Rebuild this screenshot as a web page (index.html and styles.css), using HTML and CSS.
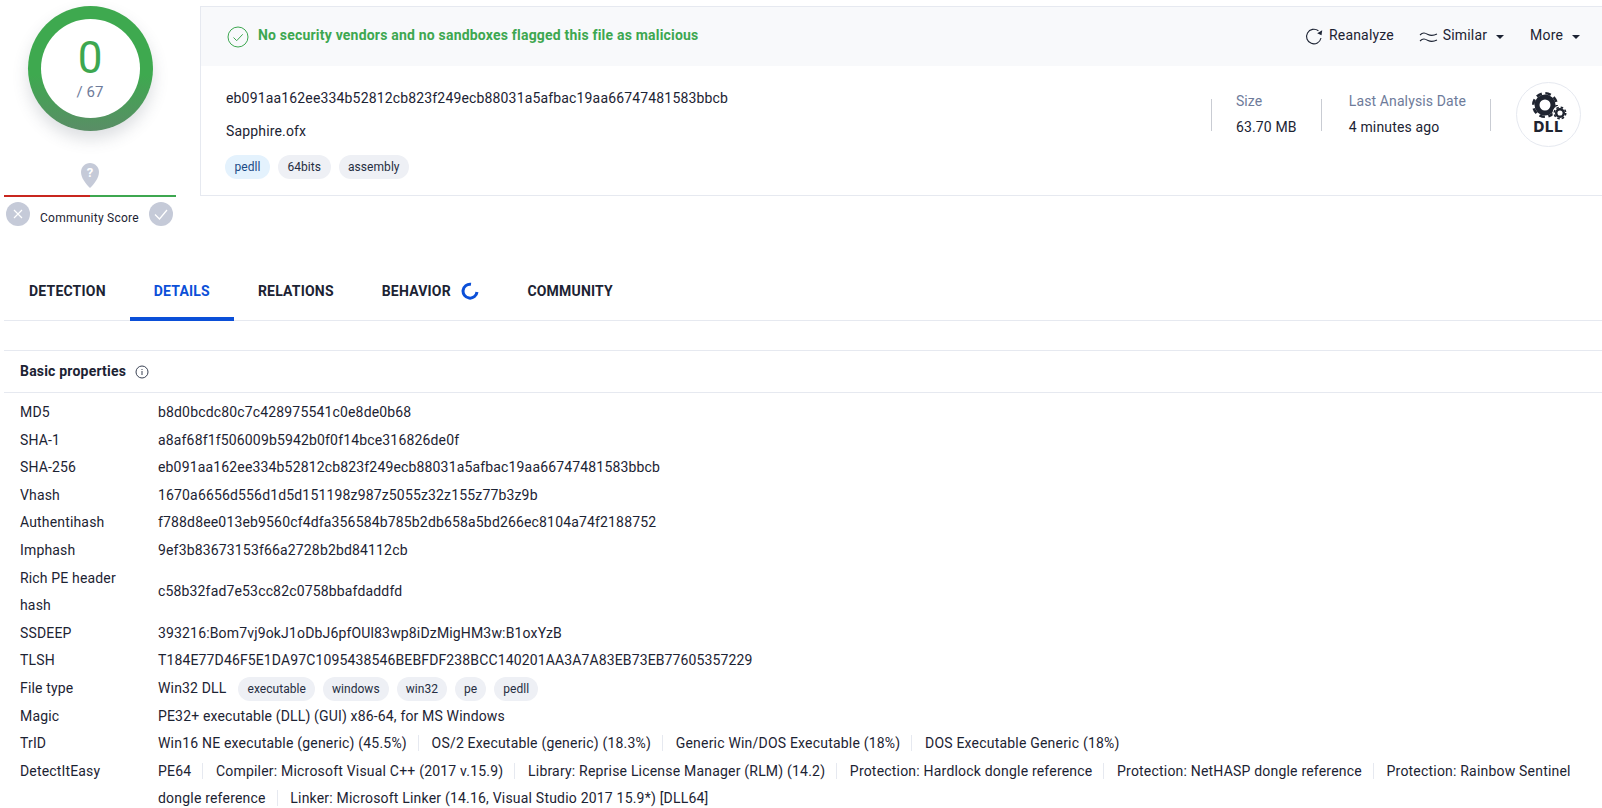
FILE: index.html
```html
<!DOCTYPE html>
<html lang="en">
<head>
<meta charset="utf-8">
<title>VirusTotal - File</title>
<link rel="stylesheet" href="styles.css">
</head>
<body>
<div class="page">
  <header class="top">
    <aside class="score">
      <div class="ring">
        <div class="ring-inner">
          <div class="ring-num">0</div>
          <div class="ring-total">/ 67</div>
        </div>
      </div>
      <svg class="pin" width="20" height="27" viewBox="0 0 20 27"><path d="M10 1C5 1 1 5 1 10c0 6 5 12 9 16 4-4 9-10 9-16 0-5-4-9-9-9z" fill="#c5cad8"/><text x="10" y="15" text-anchor="middle" class="pin-q">?</text></svg>
      <div class="score-bar"><span class="bar-red"></span><span class="bar-green"></span></div>
      <div class="score-row">
        <svg width="24" height="24" viewBox="0 0 24 24"><circle cx="12" cy="12" r="12" fill="#c5cad8"/><path d="M8 8l8 8M16 8l-8 8" stroke="#fff" stroke-width="1.2" fill="none"/></svg>
        <span class="score-label">Community Score</span>
        <svg width="24" height="24" viewBox="0 0 24 24"><circle cx="12" cy="12" r="12" fill="#c5cad8"/><path d="M6 12.5l4.5 4.5L18 8" stroke="#fff" stroke-width="1.3" fill="none"/></svg>
      </div>
    </aside>
    <section class="card">
      <div class="card-bar">
        <svg class="ok-icon" width="22" height="22" viewBox="0 0 22 22"><circle cx="11" cy="11" r="10" fill="none" stroke="#3da750" stroke-width="1"/><path d="M6.5 11.5l3.2 3.2 6-6.4" fill="none" stroke="#3da750" stroke-width="1"/></svg>
        <span class="verdict">No security vendors and no sandboxes flagged this file as malicious</span>
        <div class="actions">
          <span class="action action-first"><svg class="act-icon" width="19" height="19" viewBox="0 0 19 19"><path d="M16 11a7.3 7.3 0 1 1-2.6-7.2" fill="none" stroke="#1c2333" stroke-width="1.1"/><path d="M17.2 3.2l-.7 5-4.3-1.9z" fill="#1c2333"/></svg><span class="act-text">Reanalyze</span></span>
          <span class="action"><svg class="act-icon" width="19" height="14" viewBox="0 0 19 14"><path d="M1 5c3-3 5-2 8-.5s5 1.5 9-.5M1 11c3-3 5-2 8-.5s5 1.5 9-.5" fill="none" stroke="#1c2333" stroke-width="1.1"/></svg><span class="act-text">Similar</span><i class="caret"></i></span>
          <span class="action"><span class="act-text">More</span><i class="caret"></i></span>
        </div>
      </div>
      <div class="card-body">
        <div class="file-id">
          <div class="hash">eb091aa162ee334b52812cb823f249ecb88031a5afbac19aa66747481583bbcb</div>
          <div class="fname">Sapphire.ofx</div>
          <div class="tags"><span class="pill pill-blue">pedll</span><span class="pill">64bits</span><span class="pill">assembly</span></div>
        </div>
        <div class="meta">
          <div class="meta-item"><div class="meta-k">Size</div><div class="meta-v">63.70 MB</div></div>
          <div class="meta-item meta-wide"><div class="meta-k">Last Analysis Date</div><div class="meta-v">4 minutes ago</div></div>
          <div class="meta-sep"></div>
          <div class="dll">
            <svg width="40" height="28" viewBox="0 0 40 28"><circle cx="16" cy="13" r="8" fill="none" stroke="#1f2430" stroke-width="5"/><circle cx="16" cy="13" r="11.7" fill="none" stroke="#1f2430" stroke-width="2.6" stroke-dasharray="5.6 3.59"/><circle cx="31" cy="21" r="7.6" fill="#fff"/><circle cx="31" cy="21" r="3.8" fill="none" stroke="#1f2430" stroke-width="2.5"/><circle cx="31" cy="21" r="5.7" fill="none" stroke="#1f2430" stroke-width="1.6" stroke-dasharray="2.5 1.98"/></svg>
            <span class="dll-text">DLL</span>
          </div>
        </div>
      </div>
    </section>
  </header>

  <nav class="tabs">
    <a class="tab">DETECTION</a>
    <a class="tab tab-active">DETAILS</a>
    <a class="tab">RELATIONS</a>
    <a class="tab">BEHAVIOR<svg class="spin" width="18" height="18" viewBox="0 0 18 18"><path d="M10 2.2A7 7 0 1 0 16 10" fill="none" stroke="#0b4fd8" stroke-width="3"/></svg></a>
    <a class="tab">COMMUNITY</a>
  </nav>

  <section class="props">
    <h2 class="props-head"><span class="head-text">Basic properties</span><svg width="14" height="14" viewBox="0 0 14 14"><circle cx="7" cy="7" r="6" fill="none" stroke="#3a4254" stroke-width="1"/><path d="M7 6v4M7 4v1" stroke="#3a4254" stroke-width="1"/></svg></h2>
    <dl class="grid">
      <dt>MD5</dt><dd>b8d0bcdc80c7c428975541c0e8de0b68</dd>
      <dt>SHA-1</dt><dd>a8af68f1f506009b5942b0f0f14bce316826de0f</dd>
      <dt>SHA-256</dt><dd>eb091aa162ee334b52812cb823f249ecb88031a5afbac19aa66747481583bbcb</dd>
      <dt>Vhash</dt><dd>1670a6656d556d1d5d151198z987z5055z32z155z77b3z9b</dd>
      <dt>Authentihash</dt><dd>f788d8ee013eb9560cf4dfa356584b785b2db658a5bd266ec8104a74f2188752</dd>
      <dt>Imphash</dt><dd>9ef3b83673153f66a2728b2bd84112cb</dd>
      <dt>Rich PE header hash</dt><dd class="mid">c58b32fad7e53cc82c0758bbafdaddfd</dd>
      <dt>SSDEEP</dt><dd>393216:Bom7vj9okJ1oDbJ6pfOUl83wp8iDzMigHM3w:B1oxYzB</dd>
      <dt>TLSH</dt><dd class="tight">T184E77D46F5E1DA97C1095438546BEBFDF238BCC140201AA3A7A83EB73EB77605357229</dd>
      <dt>File type</dt><dd class="ftype">Win32 DLL<span class="pill">executable</span><span class="pill">windows</span><span class="pill">win32</span><span class="pill">pe</span><span class="pill">pedll</span></dd>
      <dt>Magic</dt><dd>PE32+ executable (DLL) (GUI) x86-64, for MS Windows</dd>
      <dt>TrID</dt><dd><span class="seg">Win16 NE executable (generic) (45.5%)</span> <span class="seg">OS/2 Executable (generic) (18.3%)</span> <span class="seg">Generic Win/DOS Executable (18%)</span> <span class="seg seg-last">DOS Executable Generic (18%)</span></dd>
      <dt>DetectItEasy</dt><dd><span class="seg">PE64</span> <span class="seg">Compiler: Microsoft Visual C++ (2017 v.15.9)</span> <span class="seg">Library: Reprise License Manager (RLM) (14.2)</span> <span class="seg">Protection: Hardlock dongle reference</span> <span class="seg">Protection: NetHASP dongle reference</span> <span class="seg seg-last">Protection: Rainbow Sentinel</span> <span class="seg">dongle reference</span> <span class="seg seg-last">Linker: Microsoft Linker (14.16, Visual Studio 2017 15.9*) [DLL64]</span></dd>
    </dl>
  </section>
</div>
</body>
</html>
```
FILE: styles.css
```css
* { box-sizing: border-box; }
html, body { margin: 0; height: 808px; overflow: hidden; background: #fff; }
body { font-family: Roboto, "Liberation Sans", sans-serif; font-size: 14px; letter-spacing: .16px; color: #1c2333; }
.page { padding: 6px 0 0 4px; }

.top { display: flex; gap: 24px; height: 190px; }
.score { width: 172px; flex: none; display: flex; flex-direction: column; align-items: center; }
.ring { width: 125px; height: 125px; border-radius: 50%; padding: 13px; flex: none;
  background: linear-gradient(#3ea94f 55%, #5a8d66 100%);
  box-shadow: 0 8px 16px rgba(60, 70, 90, .18); }
.ring-inner { width: 100%; height: 100%; border-radius: 50%; background: #fff; display: flex; flex-direction: column; align-items: center; justify-content: center; }
.ring-num { font-size: 44px; line-height: 48px; color: #3da750; margin-bottom: -1px; letter-spacing: 0; }
.ring-total { font-size: 15px; line-height: 22px; color: #6e7b9a; letter-spacing: 0; }
.pin { margin-top: 31px; flex: none; display: block; }
.pin-q { font: 700 13px Roboto, sans-serif; fill: #fff; }
.score-bar { display: flex; width: 172px; height: 2px; margin-top: 6px; flex: none; }
.bar-red { flex: 1; background: #c8261f; }
.bar-green { flex: 1; background: #3da750; }
.score-row { display: flex; justify-content: space-between; width: 172px; padding: 5px 3px 0 2px; }
.score-label { font-size: 12px; line-height: 14px; margin-top: 9px; letter-spacing: .26px; }

.card { flex: 1; border: 1px solid #e6e9f0; border-right: 0; min-width: 0; }
.card-bar { height: 59px; background: #f8f9fb; display: flex; align-items: center; padding: 0 22px 0 26px; }
.ok-icon { flex: none; margin-right: 9px; }
.verdict { font-weight: 700; color: #3da750; letter-spacing: .2px; margin-bottom: 3px; }
.actions { margin-left: auto; display: flex; gap: 26px; }
.action { display: flex; align-items: center; }
.action-first { margin-right: -1px; }
.act-icon { margin-right: 5px; }
.act-text { margin-bottom: 3px; }
.caret { width: 0; height: 0; border: 4px solid transparent; border-top-color: #1c2333; border-bottom: 0; margin-left: 9px; margin-top: 1px; }
.card-body { display: flex; justify-content: space-between; padding: 0 21px 0 25px; }
.hash { line-height: 20px; margin-top: 22px; }
.fname { line-height: 20px; margin-top: 13px; }
.tags { display: flex; gap: 8px; margin-top: 14px; margin-left: -1px; }
.tags .pill { padding: 0 9.5px; }
.pill { font-size: 12px; line-height: 24px; height: 24px; padding: 0 9px; border-radius: 12px; background: #eef0f5; color: #262e42; white-space: nowrap; letter-spacing: .05px; }
.pill-blue { background: #e4f2fd; color: #1a4a86; }
.meta { display: flex; align-items: flex-start; margin-top: 16px; }
.meta-item { border-left: 1px solid #c9ccd3; height: 32px; padding: 0 24px; margin-top: 17px; }
.meta-wide { padding-left: 27px; }
.meta-k { color: #6e7b9a; line-height: 20px; margin-top: -8px; letter-spacing: .12px; }
.meta-v { line-height: 20px; margin-top: 6px; }
.meta-sep { border-left: 1px solid #c9ccd3; height: 32px; margin-top: 17px; margin-right: 25px; }
.dll { width: 65px; height: 65px; border-radius: 50%; border: 1px solid #e6e9f0; display: flex; flex-direction: column; align-items: center; padding-top: 9px; }
.dll svg { display: block; }
.dll-text { font: 800 15px/14px Inter, "Liberation Sans", sans-serif; color: #1f2430; letter-spacing: .8px; }

.tabs { display: flex; margin-top: 71px; height: 54px; border-bottom: 1px solid #e6e9f0; padding-left: 1px; }
.tab { display: flex; align-items: flex-start; padding: 14px 24px 0; font-weight: 700; line-height: 20px; color: #1c2333; height: 54px; letter-spacing: .2px; }
.tab-active { color: #0b4fd8; border-bottom: 4px solid #0b4fd8; }
.spin { margin-left: 10.5px; margin-top: 1px; }

.props { margin-top: 29px; }
.props-head { margin: 0; height: 43px; display: flex; align-items: center; gap: 9px; padding-left: 16px; font-size: 14px; font-weight: 700; letter-spacing: .2px; border-top: 1px solid #e6e9f0; border-bottom: 1px solid #e6e9f0; }
.head-text { margin-bottom: 2px; }
.grid { margin: 6px 0 0; padding: 0 20px 0 16px; display: grid; grid-template-columns: 138px 1fr; line-height: 27.6px; }
.grid dt { font-weight: 400; padding-right: 20px; }
.grid dd { margin: 0; }
.grid .mid { align-self: center; }
.grid .tight { letter-spacing: .13px; }
.ftype { display: flex; align-items: center; gap: 8px; height: 27.6px; }
.ftype .pill { display: block; }
.ftype .pill:first-of-type { margin-left: 4px; }
.seg { padding-right: 11px; margin-right: 9px; border-right: 1px solid #e6e9f0; letter-spacing: .2px; }
.seg-last { border-right: 0; padding-right: 0; margin-right: 0; }
```
